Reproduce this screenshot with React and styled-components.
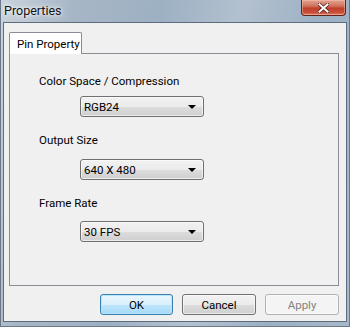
import React from "react";
import styled, { createGlobalStyle } from "styled-components";

const Global = createGlobalStyle`
  html, body { margin: 0; padding: 0; background: #9fb0c2; }
  body { font-family: Roboto, "Noto Sans", "Liberation Sans", sans-serif; }
`;

const Window = styled.div`
  width: 350px;
  height: 327px;
  box-sizing: border-box;
  display: flex;
  flex-direction: column;
  padding: 0 2px 4px 2px;
  background: linear-gradient(100deg, #c9d3dd 0%, #a7b6c6 18%, #9db0c3 40%, #b3c1cf 60%, #9cb0c4 80%, #a8b8c8 100%);
  border: 1px solid #6b7a8a;
  border-top: none;
  overflow: hidden;
`;

const TitleBar = styled.div`
  height: 22px;
  display: flex;
  align-items: flex-start;
  flex-shrink: 0;
`;

const Title = styled.div`
  font-size: 12.5px;
  color: #111;
  padding: 3px 0 0 1px;
  text-shadow: 0 0 6px #fff, 0 0 3px #fff;
  flex: 1;
  white-space: nowrap;
`;

const CloseButton = styled.div`
  width: 45px;
  height: 16px;
  margin-right: 1px;
  box-sizing: border-box;
  border: 1px solid #5e231c;
  border-top: none;
  border-radius: 0 0 4px 4px;
  background: linear-gradient(#e2a493 0%, #d0735c 40%, #c0402a 55%, #c8503a 85%, #e08a70 100%);
  box-shadow: inset 0 0 0 1px rgba(255, 200, 180, 0.45);
  display: flex;
  align-items: center;
  justify-content: center;
`;

const Client = styled.div`
  flex: 1;
  background: #f0f0f0;
  border: 1px solid #5e6d7d;
  display: flex;
  flex-direction: column;
  padding: 9px 7px 6px 5px;
`;

const TabStrip = styled.div`
  display: flex;
  height: 21px;
  position: relative;
  z-index: 1;
`;

const Tab = styled.div`
  width: 73px;
  box-sizing: border-box;
  height: 22px;
  border: 1px solid #898c95;
  border-bottom: none;
  background: #ffffff;
  font-size: 11.5px;
  color: #000;
  padding: 4px 0 0 7px;
  border-radius: 2px 2px 0 0;
  white-space: nowrap;
`;

const Panel = styled.div`
  height: 233px;
  box-sizing: border-box;
  border: 1px solid #898c95;
  background: #f0f0f0;
  padding: 20px 0 0 29px;
  display: flex;
  flex-direction: column;
  align-items: flex-start;
`;

const Label = styled.div`
  font-size: 11.5px;
  color: #000;
  line-height: 14px;
  white-space: nowrap;
  margin-top: ${(p) => p.$top || 0}px;
`;

const Combo = styled.div`
  width: 124px;
  height: 21px;
  box-sizing: border-box;
  margin-left: 41px;
  margin-top: ${(p) => p.$top || 0}px;
  border: 1px solid #707070;
  border-radius: 3px;
  background: linear-gradient(#f2f2f2 0%, #ebebeb 50%, #dddddd 51%, #cfcfcf 100%);
  box-shadow: inset 0 0 0 1px rgba(255, 255, 255, 0.6);
  display: flex;
  align-items: center;
  justify-content: space-between;
  padding: 0 7px 0 3px;
  font-size: 11.5px;
  color: #000;
`;

const Arrow = styled.span`
  width: 0;
  height: 0;
  border-left: 4px solid transparent;
  border-right: 4px solid transparent;
  border-top: 4px solid #000;
`;

const ButtonRow = styled.div`
  display: flex;
  justify-content: flex-end;
  gap: 9px;
  margin-top: 8px;
`;

const Button = styled.div`
  width: ${(p) => p.$w || 74}px;
  height: 21px;
  box-sizing: border-box;
  border: 1px solid ${(p) => (p.$default ? "#3c7fb1" : p.$disabled ? "#adb2b5" : "#707070")};
  border-radius: 3px;
  background: ${(p) =>
    p.$disabled
      ? "#f4f4f4"
      : p.$default
      ? "linear-gradient(#eaf6fd 0%, #d9f0fc 50%, #bee6fd 51%, #a7d9f5 100%)"
      : "linear-gradient(#f2f2f2 0%, #ebebeb 50%, #dddddd 51%, #cfcfcf 100%)"};
  box-shadow: inset 0 0 0 1px ${(p) => (p.$default ? "rgba(180,230,255,0.9)" : "rgba(255,255,255,0.6)")};
  display: flex;
  align-items: center;
  justify-content: center;
  font-size: 11.5px;
  color: ${(p) => (p.$disabled ? "#838383" : "#000")};
`;

const fields = [
  { label: "Color Space / Compression", value: "RGB24", lt: 0, ct: 8 },
  { label: "Output Size", value: "640 X 480", lt: 16, ct: 12 },
  { label: "Frame Rate", value: "30 FPS", lt: 16, ct: 11 },
];

export default function App() {
  return (
    <>
      <Global />
      <Window>
        <TitleBar>
          <Title>Properties</Title>
          <CloseButton>
            <svg width="11" height="10" viewBox="0 0 11 10">
              <path d="M1.5 1.5 L9.5 8.5 M9.5 1.5 L1.5 8.5" stroke="#4a1a14" strokeWidth="3.4" strokeLinecap="square" />
              <path d="M1.5 1.5 L9.5 8.5 M9.5 1.5 L1.5 8.5" stroke="#ffffff" strokeWidth="2" strokeLinecap="square" />
            </svg>
          </CloseButton>
        </TitleBar>
        <Client>
          <TabStrip>
            <Tab>Pin Property</Tab>
          </TabStrip>
          <Panel>
            {fields.map((f) => (
              <React.Fragment key={f.label}>
                <Label $top={f.lt}>{f.label}</Label>
                <Combo $top={f.ct}>
                  <span>{f.value}</span>
                  <Arrow />
                </Combo>
              </React.Fragment>
            ))}
          </Panel>
          <ButtonRow>
            <Button $default $w={73}>OK</Button>
            <Button $w={74}>Cancel</Button>
            <Button $disabled $w={74}>Apply</Button>
          </ButtonRow>
        </Client>
      </Window>
    </>
  );
}
